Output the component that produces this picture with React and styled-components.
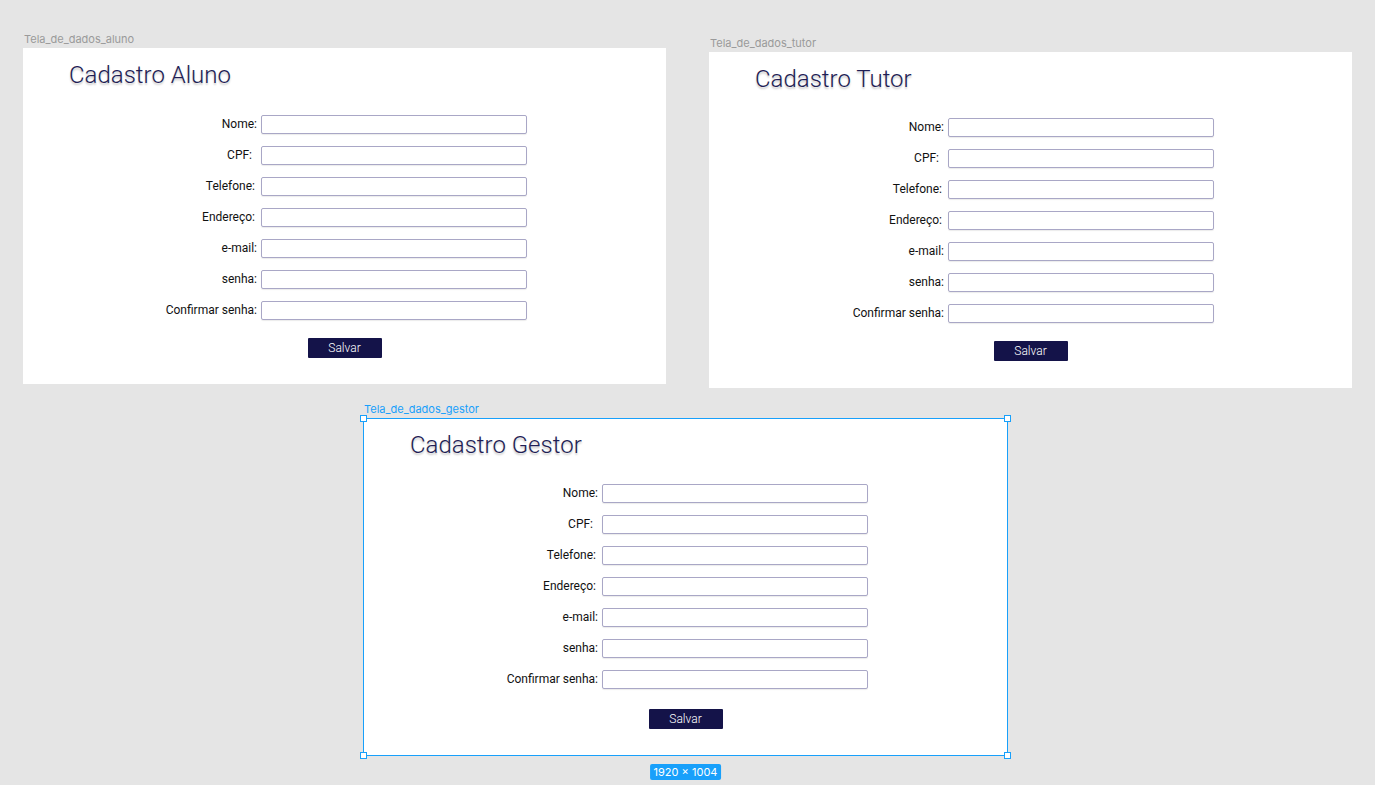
import React from 'react';
import styled, { createGlobalStyle, css } from 'styled-components';

const GlobalStyle = createGlobalStyle`
    html, body {
        margin: 0;
        padding: 0;
        background: #e5e5e5;
    }
    * { box-sizing: border-box; }
`

const Canvas = styled.div`
    position: relative;
    width: 1375px;
    height: 785px;
    overflow: hidden;
    background: #e5e5e5;
    font-family: Roboto, 'Liberation Sans', sans-serif;
`

// frames sit on the free canvas, like in the design tool
const Frame = styled.div`
    position: absolute;
    left: ${p => p.x}px;
    top: ${p => p.y}px;
    width: ${p => p.w}px;
    height: ${p => p.h}px;
    background: #fff;
    display: flex;
    flex-direction: column;
    ${p => p.selected && css`
        outline: 1px solid #18a0fb;
        outline-offset: -1px;
    `}
`

const FrameName = styled.div`
    position: absolute;
    left: 1px;
    bottom: 100%;
    margin-bottom: 2px;
    font-family: Inter, 'Liberation Sans', sans-serif;
    font-size: 11px;
    line-height: 13px;
    color: ${p => p.selected ? '#18a0fb' : '#9a9a9a'};
    white-space: nowrap;
`

const Handle = styled.span`
    position: absolute;
    width: 7px;
    height: 7px;
    background: #fff;
    border: 1px solid #18a0fb;
    ${p => p.top ? 'top: -3px;' : 'bottom: -3px;'}
    ${p => p.left ? 'left: -3px;' : 'right: -3px;'}
`

const SizeBadge = styled.div`
    position: absolute;
    top: 100%;
    left: 50%;
    transform: translateX(-50%);
    margin-top: 8px;
    padding: 0 4px;
    height: 16px;
    line-height: 16px;
    border-radius: 2px;
    background: #18a0fb;
    color: #fff;
    font-family: Inter, 'Liberation Sans', sans-serif;
    font-size: 11px;
    white-space: nowrap;
`

const Title = styled.h1`
    margin: 13px 0 0 ${p => p.indent}px;
    font-size: 24px;
    line-height: 28px;
    font-weight: 300;
    color: #1f1e55;
    text-shadow: 0 2px 2px rgba(0, 0, 0, 0.22);
`

const Form = styled.form`
    margin: ${p => p.top}px 0 0 ${p => p.indent}px;
    display: grid;
    grid-template-columns: 234px 266px;
    grid-auto-rows: 19px;
    column-gap: 4px;
    row-gap: 12px;
`

const Label = styled.label`
    font-size: 12px;
    line-height: 19px;
    color: #111;
    text-align: right;
    padding-right: ${p => p.pad || 0}px;
    white-space: nowrap;
`

const Field = styled.input`
    height: 19px;
    margin: 0;
    border: 1px solid #a9a7c6;
    border-radius: 2px;
    background: #fff;
    box-shadow: 0 1px 1px rgba(0, 0, 0, 0.08);
    outline: none;
`

const Button = styled.button`
    align-self: center;
    margin-top: ${p => p.top}px;
    width: 74px;
    height: 20px;
    padding: 0;
    border: none;
    border-radius: 1px;
    background: #141349;
    color: #fff;
    font-family: Roboto, 'Liberation Sans', sans-serif;
    font-size: 12px;
    font-weight: 300;
`

const fields = [
    { label: 'Nome:', pad: 0 },
    { label: 'CPF:', pad: 5 },
    { label: 'Telefone:', pad: 2 },
    { label: 'Endereço:', pad: 2 },
    { label: 'e-mail:', pad: 0 },
    { label: 'senha:', pad: 0 },
    { label: 'Confirmar senha:', pad: 0 },
]

const screens = [
    { name: 'Tela_de_dados_aluno', title: 'Cadastro Aluno', x: 23, y: 48, w: 643, h: 336, titleIndent: 46, formTop: 26, formIndent: 0, btnTop: 18 },
    { name: 'Tela_de_dados_tutor', title: 'Cadastro Tutor', x: 709, y: 52, w: 643, h: 336, titleIndent: 46, formTop: 25, formIndent: 1, btnTop: 18 },
    { name: 'Tela_de_dados_gestor', title: 'Cadastro Gestor', x: 363, y: 418, w: 645, h: 338, titleIndent: 47, formTop: 25, formIndent: 1, btnTop: 20, selected: true },
]

function Screen({ s }) {
    return (
        <Frame x={s.x} y={s.y} w={s.w} h={s.h} selected={s.selected}>
            <FrameName selected={s.selected}>{s.name}</FrameName>
            <Title indent={s.titleIndent}>{s.title}</Title>
            <Form top={s.formTop} indent={s.formIndent} onSubmit={e => e.preventDefault()}>
                {fields.map(f => (
                    <React.Fragment key={f.label}>
                        <Label pad={f.pad}>{f.label}</Label>
                        <Field type="text" />
                    </React.Fragment>
                ))}
            </Form>
            <Button top={s.btnTop}>Salvar</Button>
            {s.selected && (
                <>
                    <Handle top left />
                    <Handle top />
                    <Handle left />
                    <Handle />
                    <SizeBadge>1920 × 1004</SizeBadge>
                </>
            )}
        </Frame>
    )
}

export default function App() {
    return (
        <Canvas>
            <GlobalStyle />
            {screens.map(s => <Screen key={s.name} s={s} />)}
        </Canvas>
    )
}
